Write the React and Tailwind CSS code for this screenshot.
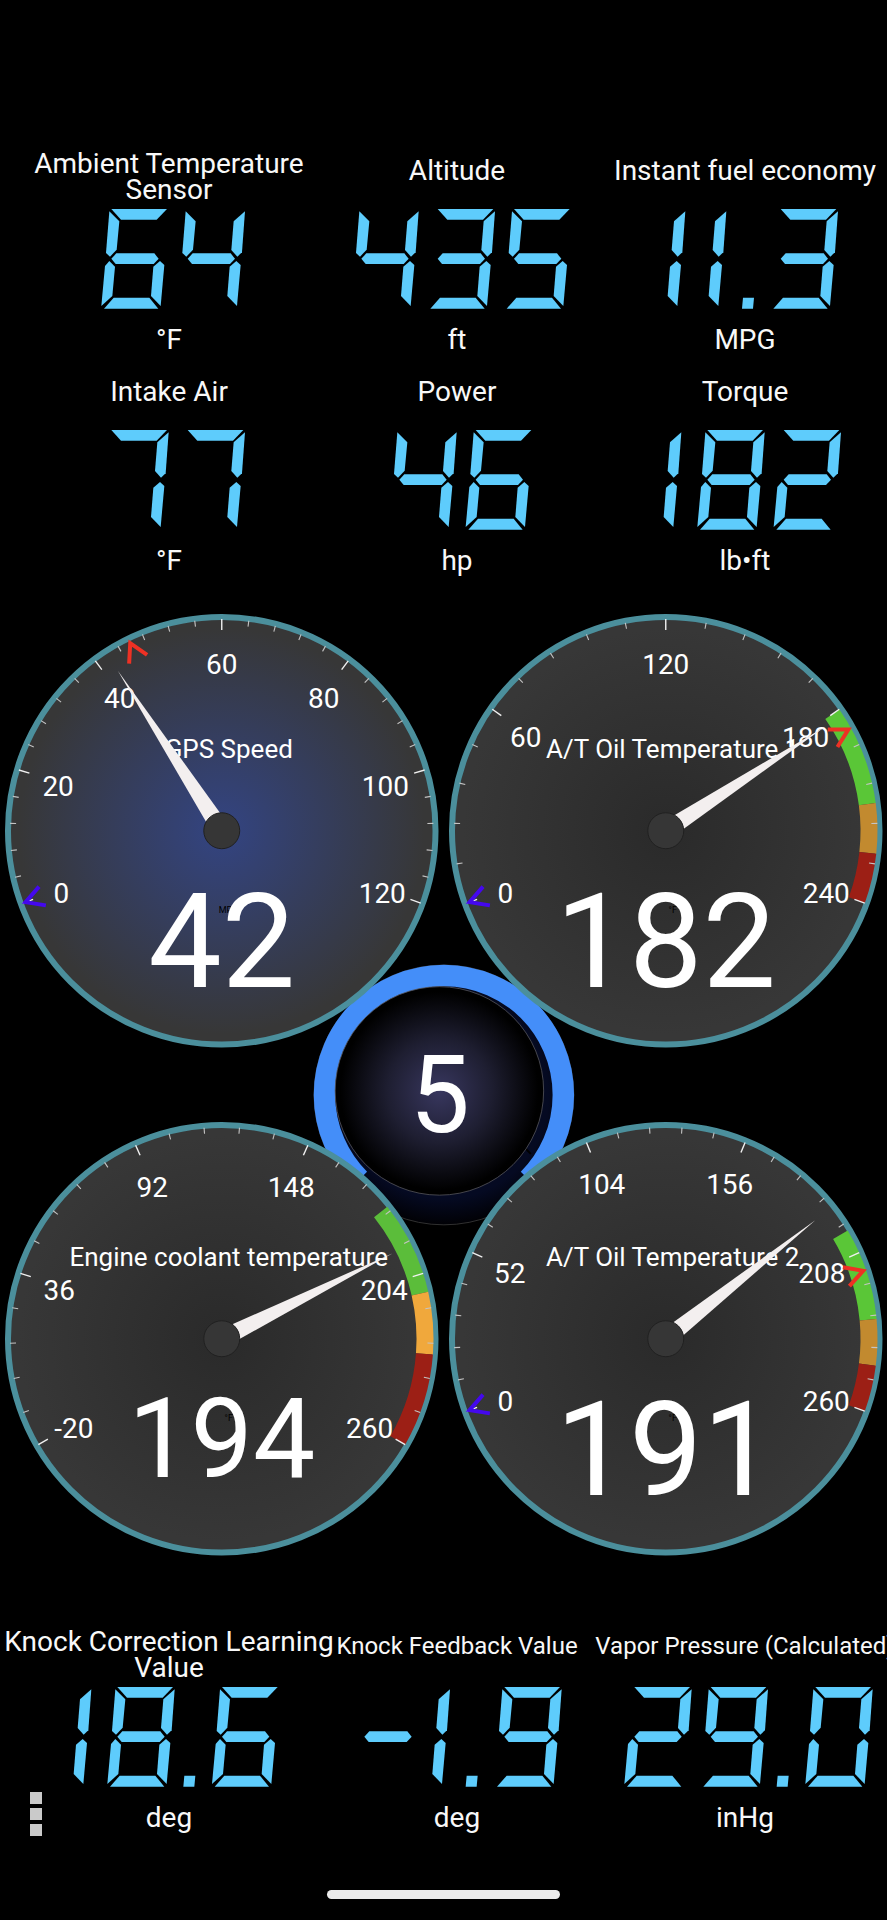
const TOP_READINGS = [
  { title: ['Ambient Temperature', 'Sensor'], value: '64', unit: '°F' },
  { title: ['Altitude'], value: '435', unit: 'ft' },
  { title: ['Instant fuel economy'], value: '11.3', unit: 'MPG' },
  { title: ['Intake Air'], value: '77', unit: '°F' },
  { title: ['Power'], value: '46', unit: 'hp' },
  { title: ['Torque'], value: '182', unit: 'lb•ft' },
]

const BOTTOM_READINGS = [
  { title: ['Knock Correction Learning', 'Value'], value: '18.6', unit: 'deg' },
  { title: ['Knock Feedback Value'], value: '-1.9', unit: 'deg', small: true },
  { title: ['Vapor Pressure (Calculated)'], value: '29.0', unit: 'inHg', small: true },
]

const GAUGES = [
  {
    id: 'gps', title: 'GPS Speed', unit: 'MPH', value: 42, min: 0, max: 120, step: 20, start: 200,
    glow: '#334482', zones: [], low: 200, high: 116, size: 131, baseline: 378,
  },
  {
    id: 'oil1', title: 'A/T Oil Temperature 1', unit: '°F', value: 182, min: 0, max: 240, step: 60, start: 200,
    glow: '#2a2a2a', low: 200, high: 29, size: 131, baseline: 378,
    zones: [[180, 210, '#5ac637'], [210, 225, '#c28a2f'], [225, 240, '#9c1f15']],
  },
  {
    id: 'coolant', title: 'Engine coolant temperature', unit: '°F', value: 194, min: -20, max: 260, step: 56, start: 210,
    glow: '#2a2a2a', size: 111, baseline: 360,
    zones: [[180, 210, '#5bbd3a'], [210, 230, '#f0a83c'], [230, 260, '#9c1f15']],
  },
  {
    id: 'oil2', title: 'A/T Oil Temperature 2', unit: '°F', value: 191, min: 0, max: 260, step: 52, start: 200,
    glow: '#2a2a2a', low: 200, high: 19, size: 131, baseline: 378,
    zones: [[200, 230, '#5ac637'], [230, 245, '#c28a2f'], [245, 260, '#9c1f15']],
  },
]

// Segment lamps, lettered a-g clockwise from the top with g in the middle
const LAMPS = {
  a: '55,0 222,0 191,32 84,32',
  b: '227,7 218,130 204,143 186,123 193,37',
  c: '201,156 214,168 203,291 174,261 181,173',
  d: '33,299 62,266 169,266 196,299',
  e: '49,156 66,173 58,261 25,291 36,171',
  f: '49,7 79,37 71,122 51,143 39,132',
  g: '55,149 70,133 184,133 197,149 182,165 68,165',
  p: '27,266 60,266 57,299 24,299',
}

// lit lamps, shift of the lamps inside the cell, cell width
const CELLS = {
  0: ['abcdef', 0, 229],
  1: ['bc', -127, 123],
  2: ['abged', 0, 229],
  3: ['abgcd', 0, 229],
  4: ['fgbc', 0, 229],
  5: ['afgcd', 0, 229],
  6: ['afgecd', 0, 229],
  7: ['abc', 0, 229],
  8: ['abcdefg', 0, 229],
  9: ['abcdfg', 0, 229],
  '-': ['g', -15, 197],
  '.': ['p', 0, 85],
}

function SegmentDisplay({ value }) {
  let width = 0
  const cells = [...value].map((ch) => {
    const [lit, shift, advance] = CELLS[ch]
    const x = width + shift
    width += advance
    return { lit, x }
  })
  return (
    <svg viewBox={`0 0 ${width} 300`} role="img" aria-label={value} className="h-[100px] w-auto shrink-0 fill-[#5eccfc]">
      {cells.map((cell, i) => (
        <g key={i} transform={`translate(${cell.x} 0)`}>
          {[...cell.lit].map((l) => <polygon key={l} points={LAMPS[l]} />)}
        </g>
      ))}
    </svg>
  )
}

function Reading({ title, value, unit, small }) {
  const leading =
    title.length > 1 ? 'pt-px text-[28px] leading-[26px]' : small ? 'text-2xl leading-9' : 'pt-px text-[28px] leading-10'
  return (
    <div className="flex flex-col items-center">
      <h2 className={`h-[59px] whitespace-nowrap text-center ${leading}`}>
        {title.map((line) => <span key={line} className="block">{line}</span>)}
      </h2>
      <SegmentDisplay value={value} />
      <div className="text-[28px] leading-[62px]">{unit}</div>
    </div>
  )
}

function Readings({ items }) {
  return (
    <div className="-mr-0.5 grid grid-cols-3 pl-[25px]">
      {items.map((r) => <Reading key={r.title[0]} {...r} />)}
    </div>
  )
}

const C = 222

function polar(deg, r, cy = C) {
  const a = (deg * Math.PI) / 180
  return [C + r * Math.cos(a), cy - r * Math.sin(a)]
}

function zonePath(from, to) {
  const [x1, y1] = polar(from, 212)
  const [x2, y2] = polar(to, 212)
  const [x3, y3] = polar(to, 195)
  const [x4, y4] = polar(from, 195)
  return `M${x1} ${y1}A212 212 0 0 1 ${x2} ${y2}L${x3} ${y3}A195 195 0 0 0 ${x4} ${y4}Z`
}

function Marker({ deg, color }) {
  return (
    <polyline
      points={`${C + 191},${C - 10} ${C + 209},${C} ${C + 191},${C + 10}`}
      transform={`rotate(${-deg} ${C} ${C})`}
      fill="none"
      stroke={color}
      strokeWidth="4"
    />
  )
}

function Gauge({ id, title, unit, value, min, max, step, start, glow, zones, low, high, size, baseline }) {
  const sweep = (start - 90) * 2
  const angle = (v) => start - ((v - min) / (max - min)) * sweep
  const majors = (max - min) / step
  const ticks = Array.from({ length: majors * 5 + 1 }, (_, i) => i)
  const labels = Array.from({ length: majors + 1 }, (_, i) => min + i * step)

  return (
    <svg viewBox="0 0 444 444" className="block w-full fill-white">
      <defs>
        <radialGradient id={`face-${id}`}>
          <stop offset="0" stopColor={glow} />
          <stop offset="0.95" stopColor="#373737" />
        </radialGradient>
      </defs>
      <circle cx={C} cy={C} r="214" fill={`url(#face-${id})`} stroke="#4b8f9c" strokeWidth="6" />

      {zones.map(([from, to, color]) => <path key={from} d={zonePath(angle(from), angle(to))} fill={color} />)}

      {ticks.map((i) => {
        const major = i % 5 === 0
        const deg = start - (i * sweep) / (majors * 5)
        const [x1, y1] = polar(deg, 212)
        const [x2, y2] = polar(deg, major ? 201 : 206)
        return <line key={i} x1={x1} y1={y1} x2={x2} y2={y2} stroke={major ? '#f0f0f0' : '#c4c4c4'} strokeWidth={major ? 1.4 : 1.1} />
      })}

      {labels.map((v) => {
        const [x, y] = polar(angle(v), 171, C + 14)
        return <text key={v} x={x} y={y} textAnchor="middle" fontSize="28">{v}</text>
      })}

      <text x={C + 7} y={C - 73} textAnchor="middle" fontSize="26">{title}</text>
      <text x={C + 7} y={C + 82} textAnchor="middle" fontSize="9" fill="#000">{unit}</text>

      {low && <Marker deg={low} color="#4408ee" />}
      {high && <Marker deg={high} color="#ee3124" />}

      {/* Needle and hub */}
      <polygon
        points={`${C},${C - 9} ${C + 191},${C} ${C},${C + 9}`}
        transform={`rotate(${-angle(value)} ${C} ${C})`}
        fill="#f3efef"
      />
      <circle cx={C} cy={C} r="18" fill="#363636" stroke="#202020" strokeWidth="1" />

      <text x={C} y={baseline} textAnchor="middle" fontSize={size}>{value}</text>
    </svg>
  )
}

function GearIndicator({ gear }) {
  return (
    <svg viewBox="0 0 284 284" className="absolute inset-0 m-auto w-[32%]">
      <defs>
        <radialGradient id="gear-body">
          <stop offset="0.8" stopColor="#050a22" />
          <stop offset="1" stopColor="#010105" />
        </radialGradient>
        <radialGradient id="gear-face">
          <stop offset="0" stopColor="#38375f" />
          <stop offset="0.5" stopColor="#1e1e31" />
          <stop offset="0.95" stopColor="#000" />
        </radialGradient>
      </defs>
      <circle cx="142" cy="152" r="130" fill="url(#gear-body)" stroke="#3c3c3c" strokeWidth="0.8" />
      <path d="M57.5 236.5A119.5 119.5 0 1 1 226.5 236.5" fill="none" stroke="#448ef9" strokeWidth="21.5" />
      <path d="M222 204L229 211" stroke="#000" strokeWidth="2" />
      <circle cx="137.5" cy="148" r="104.3" fill="url(#gear-face)" stroke="#55565c" strokeWidth="0.8" />
      <text x="138" y="189" textAnchor="middle" fontSize="107" fill="#fff">{gear}</text>
    </svg>
  )
}

export default function App() {
  return (
    <main className="min-h-screen overflow-hidden bg-black pt-[150px] pb-[21px] font-[Roboto,sans-serif] text-[#f8f8f8]">
      <Readings items={TOP_READINGS} />

      <section className="relative mt-[17px]">
        <GearIndicator gear="5" />
        <div className="relative grid grid-cols-2 gap-y-16">
          {GAUGES.map((g) => <Gauge key={g.id} {...g} />)}
        </div>
      </section>

      <section className="relative mt-[68px]">
        <Readings items={BOTTOM_READINGS} />
        <button type="button" aria-label="Menu" className="absolute top-[164px] left-[30px] flex flex-col gap-1">
          <span className="size-3 bg-[#cacaca]" />
          <span className="size-3 bg-[#cacaca]" />
          <span className="size-3 bg-[#cacaca]" />
        </button>
      </section>

      <div className="mx-auto mt-[41px] h-[9px] w-[233px] rounded-full bg-[#ebebeb]" />
    </main>
  )
}
